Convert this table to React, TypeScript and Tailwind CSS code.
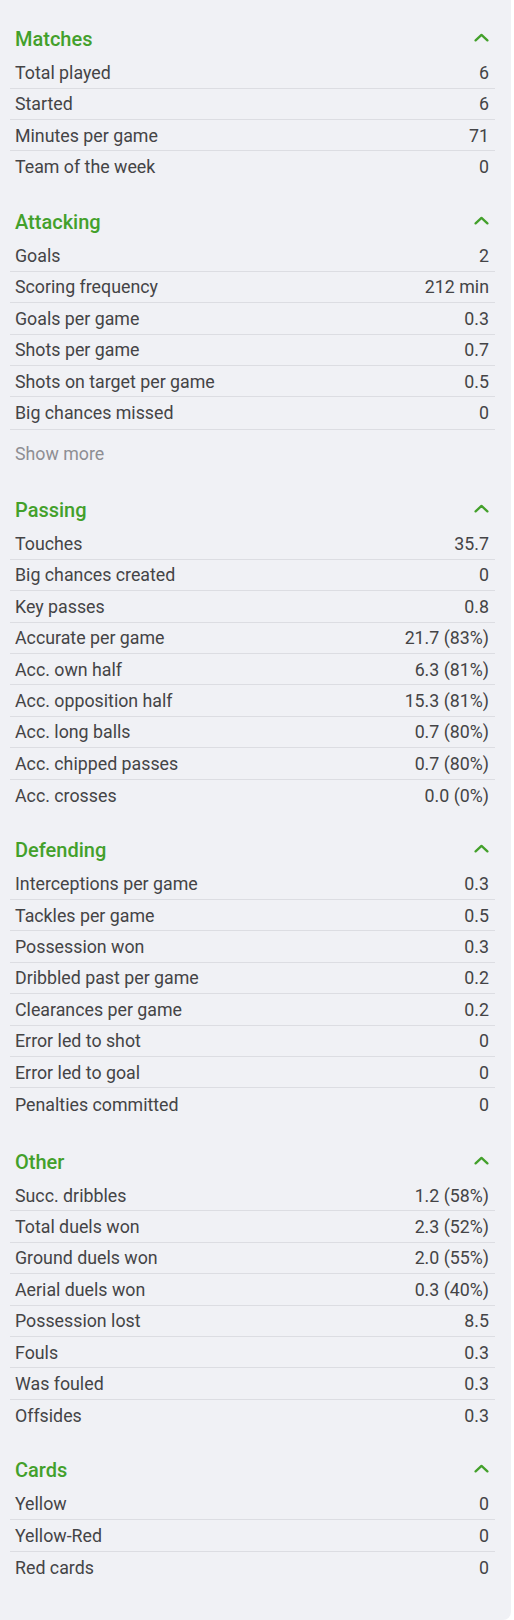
import React from 'react';

type Row = [string, string];
type Section = { title: string; rows: Row[]; more?: boolean; top?: string };

const sections: Section[] = [
  {
    title: 'Matches',
    top: 'pt-[20.5px]',
    rows: [
      ['Total played', '6'],
      ['Started', '6'],
      ['Minutes per game', '71'],
      ['Team of the week', '0'],
    ],
  },
  {
    title: 'Attacking',
    more: true,
    rows: [
      ['Goals', '2'],
      ['Scoring frequency', '212 min'],
      ['Goals per game', '0.3'],
      ['Shots per game', '0.7'],
      ['Shots on target per game', '0.5'],
      ['Big chances missed', '0'],
    ],
  },
  {
    title: 'Passing',
    rows: [
      ['Touches', '35.7'],
      ['Big chances created', '0'],
      ['Key passes', '0.8'],
      ['Accurate per game', '21.7 (83%)'],
      ['Acc. own half', '6.3 (81%)'],
      ['Acc. opposition half', '15.3 (81%)'],
      ['Acc. long balls', '0.7 (80%)'],
      ['Acc. chipped passes', '0.7 (80%)'],
      ['Acc. crosses', '0.0 (0%)'],
    ],
  },
  {
    title: 'Defending',
    rows: [
      ['Interceptions per game', '0.3'],
      ['Tackles per game', '0.5'],
      ['Possession won', '0.3'],
      ['Dribbled past per game', '0.2'],
      ['Clearances per game', '0.2'],
      ['Error led to shot', '0'],
      ['Error led to goal', '0'],
      ['Penalties committed', '0'],
    ],
  },
  {
    title: 'Other',
    top: 'pt-[23.5px]',
    rows: [
      ['Succ. dribbles', '1.2 (58%)'],
      ['Total duels won', '2.3 (52%)'],
      ['Ground duels won', '2.0 (55%)'],
      ['Aerial duels won', '0.3 (40%)'],
      ['Possession lost', '8.5'],
      ['Fouls', '0.3'],
      ['Was fouled', '0.3'],
      ['Offsides', '0.3'],
    ],
  },
  {
    title: 'Cards',
    rows: [
      ['Yellow', '0'],
      ['Yellow-Red', '0'],
      ['Red cards', '0'],
    ],
  },
];

function ChevronUp() {
  return (
    <svg width="15" height="9" viewBox="0 0 15 9" fill="none">
      <path d="M1.6 7.4 L7.5 1.9 L13.4 7.4" stroke="#43a02b" strokeWidth="2.3" strokeLinecap="round" strokeLinejoin="round" />
    </svg>
  );
}

function StatSection({ section }: { section: Section }) {
  return (
    <div className={section.top ?? 'pt-[21px]'}>
      <div className="h-[36.6px] flex items-center justify-between px-[5px]">
        <span className="text-[20px] font-medium text-[#43a02b]">{section.title}</span>
        <span className="pr-[1px] pb-[3px]">
          <ChevronUp />
        </span>
      </div>
      {section.rows.map(([label, value], idx) => (
        <div
          key={label}
          className={`h-[31.42px] flex items-center justify-between pl-[5px] pr-[6px] pt-[1.5px] text-[17.8px] text-[#444446] ${
            idx < section.rows.length - 1 ? 'border-b border-[#dcdde2]' : ''
          }`}
        >
          <span>{label}</span>
          <span>{value}</span>
        </div>
      ))}
      {section.more && (
        <div className="h-[42px] pt-[11px] pl-[5px] text-[17.8px] text-[#8e8e93] border-t border-[#dcdde2]">
          Show more
        </div>
      )}
    </div>
  );
}

export default function App() {
  return (
    <div className="w-[514px] min-h-[1620px] bg-white" style={{ fontFamily: 'Roboto, "Noto Sans", sans-serif' }}>
      <div className="w-[511px] h-[1620px] bg-[#f0f1f5] rounded-br-[8px] pl-[10px] pr-[16px]">
        {sections.map((s) => (
          <StatSection key={s.title} section={s} />
        ))}
      </div>
    </div>
  );
}
